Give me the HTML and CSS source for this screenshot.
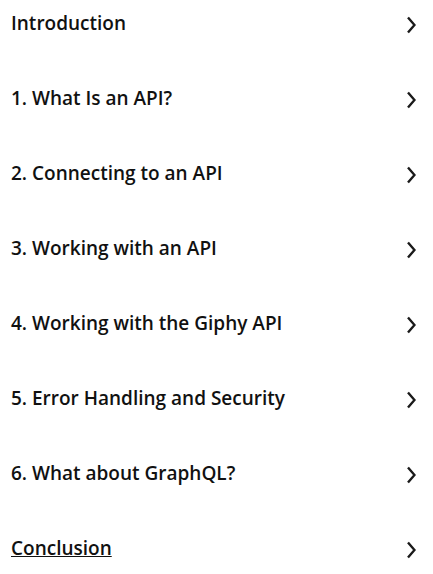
FILE: index.html
```
<!doctype html>
<html>
    <head>
        <meta charset="UTF-8" />
        <meta name="viewport" content="width=device-width" />
        <title>Contents</title>
        <link rel="stylesheet" href="styles.css">
    </head>
    <body>
        <ul class="toc">
            <li class="tocItem"><span class="tocTitle">Introduction</span><svg class="chevron" viewBox="0 0 10 18"><path d="M2 1.5 L8.5 9 L2 16.5" /></svg></li>
            <li class="tocItem"><span class="tocTitle">1. What Is an API?</span><svg class="chevron" viewBox="0 0 10 18"><path d="M2 1.5 L8.5 9 L2 16.5" /></svg></li>
            <li class="tocItem"><span class="tocTitle">2. Connecting to an API</span><svg class="chevron" viewBox="0 0 10 18"><path d="M2 1.5 L8.5 9 L2 16.5" /></svg></li>
            <li class="tocItem"><span class="tocTitle">3. Working with an API</span><svg class="chevron" viewBox="0 0 10 18"><path d="M2 1.5 L8.5 9 L2 16.5" /></svg></li>
            <li class="tocItem"><span class="tocTitle">4. Working with the Giphy API</span><svg class="chevron" viewBox="0 0 10 18"><path d="M2 1.5 L8.5 9 L2 16.5" /></svg></li>
            <li class="tocItem"><span class="tocTitle">5. Error Handling and Security</span><svg class="chevron" viewBox="0 0 10 18"><path d="M2 1.5 L8.5 9 L2 16.5" /></svg></li>
            <li class="tocItem"><span class="tocTitle">6. What about GraphQL?</span><svg class="chevron" viewBox="0 0 10 18"><path d="M2 1.5 L8.5 9 L2 16.5" /></svg></li>
            <li class="tocItem"><a class="tocTitle tocLink" href="#conclusion">Conclusion</a><svg class="chevron" viewBox="0 0 10 18"><path d="M2 1.5 L8.5 9 L2 16.5" /></svg></li>
        </ul>
    </body>
</html>
```
FILE: styles.css
```
html,
body {
    background-color: #fff;
    color: #111;
}
body {
    margin: 0;
    font-family: "Open Sans", "Noto Sans", sans-serif;
}
.toc {
    list-style: none;
    margin: 0;
    padding: 0;
}
.tocItem {
    display: flex;
    align-items: center;
    justify-content: space-between;
    height: 24px;
    padding: 11px 17px 40px 11px;
}
.tocTitle {
    font-size: 19px;
    font-weight: 600;
    line-height: 24px;
}
.tocLink {
    color: #111;
    text-decoration: underline;
}
.chevron {
    width: 10px;
    height: 18px;
    margin-top: 3px;
    fill: none;
    stroke: #1a1a1a;
    stroke-width: 2.4;
}
```
